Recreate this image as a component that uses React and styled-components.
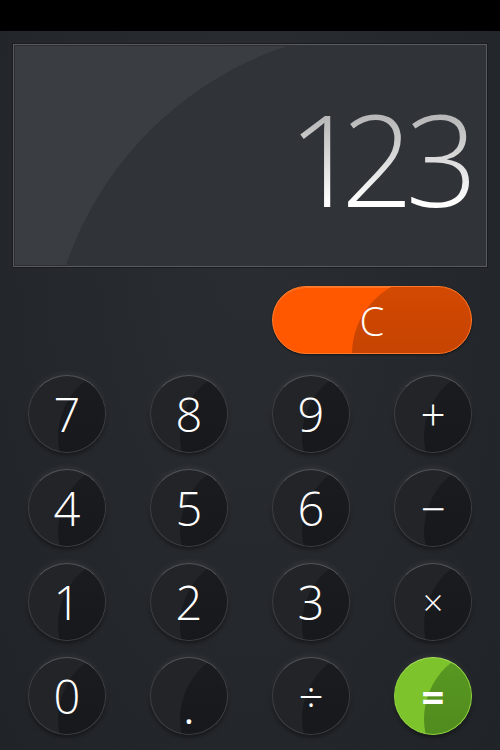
import React from "react";
import styled, { createGlobalStyle, css } from "styled-components";

const GlobalStyle = createGlobalStyle`
  html, body {
    margin: 0;
    padding: 0;
    background: #25282d;
  }
  body {
    font-family: "Open Sans", "Liberation Sans", sans-serif;
  }
`;

const Screen = styled.div`
  width: 500px;
  height: 750px;
  overflow: hidden;
  background: radial-gradient(ellipse at 50% 30%, #2a2d32 0%, #23262a 70%, #202327 100%);
`;

const StatusBar = styled.div`
  height: 31px;
  background: #000;
`;

const Display = styled.div`
  position: relative;
  overflow: hidden;
  margin: 13px 13px 0;
  height: 221px;
  border: 1px solid #575b61;
  box-shadow: 0 0 0 1px #1a1c1f, inset 0 0 0 1px rgba(0, 0, 0, 0.25);
  background: #3a3d42;
  display: flex;
  align-items: center;
  justify-content: flex-end;
  padding-right: 14px;

  &::before {
    content: "";
    position: absolute;
    left: 33px;
    top: -17px;
    width: 702px;
    height: 702px;
    border-radius: 50%;
    background: #303338;
  }
`;

const Readout = styled.div`
  position: relative;
  margin-top: 4px;
  font-family: "Open Sans", "Liberation Sans", sans-serif;
  font-weight: 300;
  font-size: 127px;
  line-height: 1;
  letter-spacing: -4px;
  font-variant-numeric: proportional-nums;
  font-feature-settings: "pnum" 1;
  background: linear-gradient(180deg, #b9b9b9 20%, #ffffff 85%);
  -webkit-background-clip: text;
  background-clip: text;
  color: transparent;
`;

const Keypad = styled.div`
  display: grid;
  grid-template-columns: repeat(4, 78px);
  grid-template-rows: 73px repeat(4, 78px);
  column-gap: 44px;
  row-gap: 16px;
  padding: 19px 28px 0;
`;

const keyBase = css`
  position: relative;
  overflow: hidden;
  display: flex;
  align-items: center;
  justify-content: center;
  padding: 0;
  color: #fff;
  font-family: "Open Sans", "Liberation Sans", sans-serif;
  font-weight: 300;
  cursor: pointer;

  & > span {
    position: relative;
  }
`;

const ClearKey = styled.button`
  ${keyBase}
  grid-column: 3 / 5;
  align-self: start;
  height: 68px;
  border-radius: 34px;
  border: 1px solid #ff7a2a;
  background: #ff5800;
  box-shadow: 0 1px 2px rgba(0, 0, 0, 0.5), inset 0 1px 0 rgba(255, 170, 110, 0.35);
  font-size: 40px;

  &::before {
    content: "";
    position: absolute;
    left: 79px;
    top: -10px;
    width: 154px;
    height: 154px;
    border-radius: 50%;
    background: linear-gradient(180deg, #d44a02, #b83d00);
  }
`;

const RoundKey = styled.button`
  ${keyBase}
  width: 78px;
  height: 78px;
  border-radius: 50%;
  font-size: ${(p) => p.$size || 47}px;
  font-weight: ${(p) => p.$weight || 300};
  border: 1px solid ${(p) => (p.$green ? "#8fd040" : "#3b3e43")};
  border-top-color: ${(p) => (p.$green ? "#a6de5c" : "#50545a")};
  background: ${(p) => (p.$green ? "#7cc32c" : "#222428")};
  box-shadow: 0 -2px 5px rgba(255, 255, 255, 0.07), 0 2px 4px rgba(0, 0, 0, 0.45);

  &::before {
    content: "";
    position: absolute;
    left: 29px;
    top: -11px;
    width: 144px;
    height: 144px;
    border-radius: 50%;
    background: ${(p) =>
      p.$green
        ? "linear-gradient(180deg, #5a9a22, #4a821b)"
        : "linear-gradient(180deg, #1b1c20, #151619)"};
  }
`;

const Dot = styled.span`
  margin-top: 30px;
  font-size: 32px;
  font-weight: 600;
`;

const keys = [
  { label: "7" },
  { label: "8" },
  { label: "9" },
  { label: "+", size: 44 },
  { label: "4" },
  { label: "5" },
  { label: "6" },
  { label: "−", size: 44 },
  { label: "1" },
  { label: "2" },
  { label: "3" },
  { label: "×", size: 36 },
  { label: "0" },
  { label: ".", dot: true },
  { label: "÷", size: 44 },
  { label: "=", size: 40, weight: 700, green: true },
];

export default function App() {
  return (
    <Screen>
      <GlobalStyle />
      <StatusBar />
      <Display>
        <Readout>123</Readout>
      </Display>
      <Keypad>
        <ClearKey>
          <span>C</span>
        </ClearKey>
        {keys.map((k) => (
          <RoundKey key={k.label} $size={k.size} $weight={k.weight} $green={k.green}>
            {k.dot ? <Dot>.</Dot> : <span>{k.label}</span>}
          </RoundKey>
        ))}
      </Keypad>
    </Screen>
  );
}
